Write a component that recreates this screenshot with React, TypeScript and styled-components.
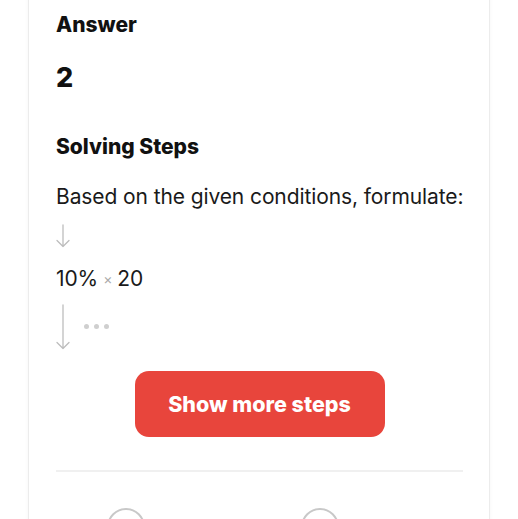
import React from "react";
import styled, { createGlobalStyle } from "styled-components";

const Global = createGlobalStyle`
  html, body { margin: 0; padding: 0; background: #ffffff; }
  body { font-family: Inter, "Noto Sans", sans-serif; color: #111; }
`;

const Page = styled.div`
  width: 518px;
  height: 519px;
  overflow: hidden;
  padding: 0 28px 0 28px;
  box-sizing: border-box;
`;

const Card = styled.div`
  margin-top: -20px;
  width: 462px;
  box-sizing: border-box;
  border: 1px solid #ececec;
  border-radius: 16px;
  box-shadow: 0 0 4px rgba(0, 0, 0, 0.04);
  padding: 32px 26px 40px 27px;
  background: #fff;
`;

const Heading = styled.h2<{ $mt?: number }>`
  margin: ${(p) => p.$mt ?? 0}px 0 0 0;
  font-size: 21px;
  line-height: 24px;
  font-weight: 800;
  color: #111;
`;

const AnswerValue = styled.div`
  margin-top: 26px;
  font-size: 27px;
  line-height: 30px;
  font-weight: 800;
`;

const StepText = styled.div`
  font-size: 21px;
  line-height: 26px;
  color: #1a1a1a;
  white-space: nowrap;
  letter-spacing: -0.1px;
`;

const Times = styled.span`
  color: #aaa;
  font-size: 14px;
  margin: 0 5px;
  vertical-align: 2px;
`;

const StepsBlock = styled.div`
  margin-top: 25px;
  display: flex;
  flex-direction: column;
`;

const ArrowRow = styled.div<{ $h: number; $pt: number }>`
  display: flex;
  align-items: flex-start;
  gap: 14px;
  height: ${(p) => p.$h}px;
  padding-top: ${(p) => p.$pt}px;
  box-sizing: border-box;
`;

const Dots = styled.div`
  display: flex;
  gap: 5px;
  margin-top: 20px;
  span {
    width: 5px;
    height: 5px;
    border-radius: 50%;
    background: #cfcfcf;
  }
`;

const ButtonRow = styled.div`
  display: flex;
  justify-content: center;
  margin-top: 9px;
`;

const MoreButton = styled.button`
  width: 250px;
  height: 66px;
  border: none;
  border-radius: 14px;
  background: #e8453c;
  color: #fff;
  font-family: Inter, "Noto Sans", sans-serif;
  font-size: 21.5px;
  font-weight: 800;
  cursor: pointer;
`;

const Divider = styled.hr`
  margin: 33px 0 0 0;
  border: none;
  border-top: 2px solid #f0f0f0;
`;

const IconRow = styled.div`
  display: flex;
  gap: 156px;
  padding-left: 51px;
  margin-top: 36px;
`;

const Circle = styled.div`
  width: 38px;
  height: 38px;
  border-radius: 50%;
  border: 2px solid #c8c8c8;
  box-sizing: border-box;
`;

const Arrow = ({ h }: { h: number }) => (
  <svg width="14" height={h} viewBox={`0 0 14 ${h}`} fill="none">
    <path d={`M7 1 V${h - 1.5} M1 ${h - 7.5} L7 ${h - 1.5} L13 ${h - 7.5}`} stroke="#bdbdbd" strokeWidth="1.3" strokeLinecap="round" strokeLinejoin="round" />
  </svg>
);

export default function App() {
  return (
    <Page>
      <Global />
      <Card>
        <Heading>Answer</Heading>
        <AnswerValue>2</AnswerValue>
        <Heading $mt={42}>Solving Steps</Heading>
        <StepsBlock>
          <StepText>Based on the given conditions, formulate:</StepText>
          <ArrowRow $h={56} $pt={14}>
            <Arrow h={24} />
          </ArrowRow>
          <StepText>
            10%<Times>×</Times>20
          </StepText>
          <ArrowRow $h={70} $pt={12}>
            <Arrow h={46} />
            <Dots>
              <span />
              <span />
              <span />
            </Dots>
          </ArrowRow>
        </StepsBlock>
        <ButtonRow>
          <MoreButton>Show more steps</MoreButton>
        </ButtonRow>
        <Divider />
        <IconRow>
          <Circle />
          <Circle />
        </IconRow>
      </Card>
    </Page>
  );
}
